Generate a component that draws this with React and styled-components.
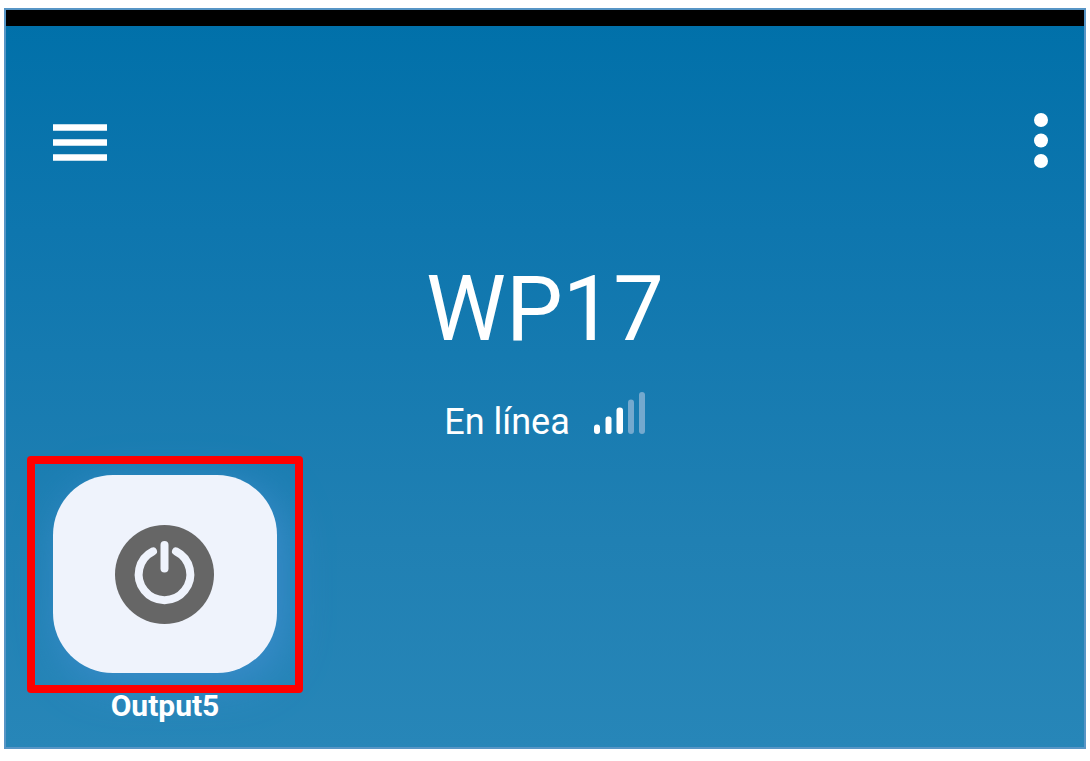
import React from "react";
import styled, { createGlobalStyle } from "styled-components";

const GlobalStyle = createGlobalStyle`
  *, *::before, *::after { box-sizing: border-box; }
  body {
    margin: 0;
    padding: 8px 4px 12px;
    background: #fff;
    color: #fff;
    font-family: Roboto, "Liberation Sans", sans-serif;
  }
  button {
    padding: 0;
    border: 0;
    background: none;
    color: inherit;
    font: inherit;
    cursor: pointer;
  }
  svg { display: block; }
`;

const Screen = styled.div`
  display: flex;
  flex-direction: column;
  min-height: calc(100vh - 20px);
  border: 2px solid #5795c5;
  background: linear-gradient(#0070a9, #0e76ae 30%, #2080b3 72%, #2786b8);
`;

const StatusBar = styled.div`
  height: 16px;
  background: #000;
`;

const Header = styled.header`
  display: flex;
  align-items: flex-end;
  justify-content: space-between;
  padding: 87px 36px 0 47px;
`;

const IconButton = styled.button`
  display: flex;
`;

const Device = styled.section`
  display: flex;
  flex-direction: column;
  align-items: center;
  padding-top: 88px;
`;

const DeviceName = styled.h1`
  margin: 0;
  font-size: 90px;
  font-weight: 400;
  line-height: 108px;
`;

const Status = styled.p`
  display: flex;
  align-items: baseline;
  gap: 24px;
  margin: 28px 0 0;
  font-size: 36px;
  line-height: 42px;
`;

const Outputs = styled.ul`
  display: flex;
  flex-wrap: wrap;
  gap: 32px;
  margin: 0;
  padding: 32px 47px 0;
  list-style: none;
`;

const Output = styled.li`
  position: relative;
  display: flex;
  flex-direction: column;
  align-items: center;
  width: 224px;
`;

const OutputButton = styled.button`
  display: flex;
  align-items: center;
  justify-content: center;
  width: 100%;
  height: 198px;
  border-radius: 60px;
  background: #eff3fc;
  box-shadow: 8px 10px 44px #3b8ccb;
`;

const OutputLabel = styled.label`
  margin-top: 16px;
  font-size: 30px;
  font-weight: 700;
  line-height: 34px;
`;

const Highlight = styled.span`
  position: absolute;
  inset: -19px -26px auto;
  height: 237px;
  border: 8px solid #f00;
  border-radius: 4px;
  pointer-events: none;
`;

const MenuIcon = () => (
  <svg width="54" height="45" viewBox="0 0 54 45" fill="#fff" aria-hidden="true">
    <path d="M0 1.3h54v6.4H0zM0 16.3h54v6.4H0zM0 31.3h54v6.4H0z" />
  </svg>
);

const MoreIcon = () => (
  <svg width="14" height="55" viewBox="0 0 14 55" fill="#fff" aria-hidden="true">
    <circle cx="7" cy="7" r="7" />
    <circle cx="7" cy="27.5" r="7" />
    <circle cx="7" cy="48" r="7" />
  </svg>
);

const SignalIcon = () => (
  <svg width="52" height="42" viewBox="0 0 52 42" fill="#fff" role="img" aria-label="Señal">
    <rect x="0" y="32.5" width="6" height="9.5" rx="3" />
    <rect x="11.5" y="24.5" width="6" height="17.5" rx="2.5" />
    <rect x="22.5" y="15.5" width="6.5" height="26.5" rx="3" />
    <g fill="#74a9ce">
      <rect x="34" y="7.5" width="6" height="34.5" rx="3" />
      <rect x="45" y="0" width="6" height="42" rx="3" />
    </g>
  </svg>
);

const PowerIcon = () => (
  <svg width="100" height="100" viewBox="0 0 100 100" fill="none" aria-hidden="true">
    <circle cx="49.5" cy="50.5" r="49.5" fill="#666" />
    <g stroke="#eff3fc" strokeWidth="8" strokeLinecap="round">
      <path d="M38 27.3A25.8 25.8 0 1 0 61 27.3" />
      <path d="M49.5 21v23.5" />
    </g>
  </svg>
);

export default function App() {
  return (
    <>
      <GlobalStyle />
      <Screen>
        <StatusBar />
        <Header>
          <IconButton type="button" aria-label="Menú">
            <MenuIcon />
          </IconButton>
          <IconButton type="button" aria-label="Más opciones">
            <MoreIcon />
          </IconButton>
        </Header>
        <main>
          <Device>
            <DeviceName>WP17</DeviceName>
            <Status>
              En línea
              <SignalIcon />
            </Status>
          </Device>
          <Outputs>
            <Output>
              <OutputButton type="button" id="output5">
                <PowerIcon />
              </OutputButton>
              <OutputLabel htmlFor="output5">Output5</OutputLabel>
              <Highlight />
            </Output>
          </Outputs>
        </main>
      </Screen>
    </>
  );
}
